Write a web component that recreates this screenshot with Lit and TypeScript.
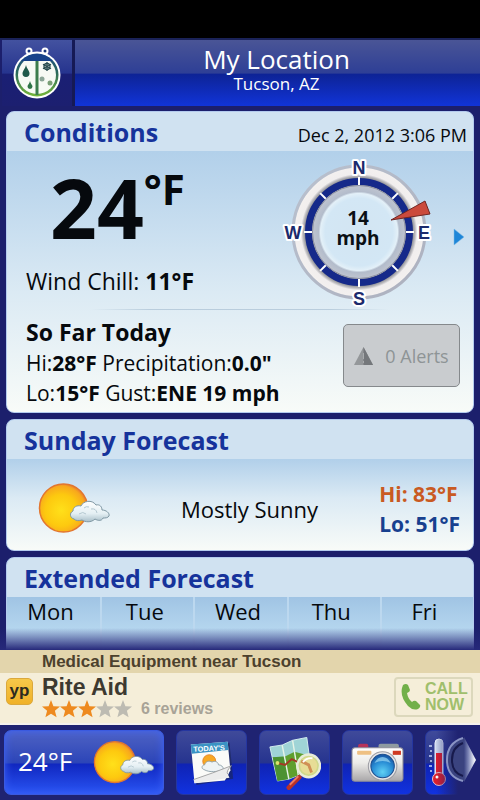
import { LitElement, html, css, svg } from "lit";
import { customElement, property } from "lit/decorators.js";

const CLOUD =
  "M35 37c-4-1-5-6-1-8 0-4 4-6 8-5 2-5 11-7 15-1 4-1 6 2 6 5 4 0 8 3 7 6-1 2-4 2-6 2-1 3-5 3-8 1-4 4-10 3-13 1-3 1-6 1-8-1z";

const sunArt = svg`
  <defs>
    <radialGradient id="sun" cx="0.45" cy="0.55" r="0.55">
      <stop offset="0" stop-color="#ffe01a" />
      <stop offset="0.6" stop-color="#fdc90f" />
      <stop offset="0.92" stop-color="#f8a81c" />
      <stop offset="1" stop-color="#ee8a2a" />
    </radialGradient>
    <linearGradient id="cloud" x1="0" y1="0" x2="0" y2="1">
      <stop offset="0" stop-color="#ffffff" />
      <stop offset="0.6" stop-color="#e4eff3" />
      <stop offset="1" stop-color="#a9bfc9" />
    </linearGradient>
  </defs>
  <circle cx="24.500" cy="26" r="24" fill="url(#sun)" stroke="#e2762f" stroke-width="1.500" />
  <path d=${CLOUD} fill="url(#cloud)" stroke="#7f97a3" stroke-width="1" />
  <path d="M40 32q4-3 7 0M52 27q5-1 6 4M45 26q2-2 5-1" fill="none" stroke="#b4c8d0" stroke-width="1" />
`;

@customElement("weather-glyph")
export class WeatherGlyph extends LitElement {
  static styles = css`
    :host { display: block; }
    .art { display: block; width: 72px; height: 54px; overflow: visible; }
  `;
  render() {
    return html`<svg class="art" viewBox="0 0 72 54" aria-hidden="true">${sunArt}</svg>`;
  }
}

@customElement("wind-compass")
export class WindCompass extends LitElement {
  @property() speed = "";

  static styles = css`
    :host { display: block; }
    .dial { display: block; width: 156px; height: 156px; }
    .point { font: bold 18px "Liberation Sans", sans-serif; fill: #1b2a6c; stroke: #fff; stroke-width: 4px; paint-order: stroke; stroke-linejoin: round; text-anchor: middle; }
    .speed { font: bold 19px "Open Sans", sans-serif; fill: #0a0f14; text-anchor: middle; }
  `;

  render() {
    const ticks = [0, 45, 90, 135, 180, 225, 270, 315];
    return html`
      <svg class="dial" viewBox="-78 -78 156 156" role="img" aria-label="Wind ${this.speed} mph from the east-northeast">
        <defs>
          <linearGradient id="rim" x1="0" y1="0" x2="1" y2="1">
            <stop offset="0" stop-color="#b9c1cf" />
            <stop offset="1" stop-color="#acb0be" />
          </linearGradient>
          <radialGradient id="band" cx="0.5" cy="0.5" r="0.5">
            <stop offset="0.8" stop-color="#77797f" />
            <stop offset="0.85" stop-color="#bcbbbf" />
            <stop offset="0.88" stop-color="#f1eeee" />
            <stop offset="0.97" stop-color="#f3f0ef" />
            <stop offset="1" stop-color="#dcdbe0" />
          </radialGradient>
          <radialGradient id="inner" cx="0.5" cy="0.5" r="0.5">
            <stop offset="0" stop-color="#d3e5f2" />
            <stop offset="0.72" stop-color="#d3e7f5" />
            <stop offset="0.82" stop-color="#e3f0f8" />
            <stop offset="0.86" stop-color="#b3bccb" />
            <stop offset="1" stop-color="#c0c5d0" />
          </radialGradient>
        </defs>
        <circle r="66" fill="url(#band)" stroke="url(#rim)" stroke-width="3" />
        <circle r="47" fill="url(#inner)" />
        <circle r="50.500" fill="none" stroke="#15298a" stroke-width="7" />
        <circle r="46.500" fill="none" stroke="#8c90a0" stroke-width="1" />
        ${ticks.map(
          (angle) => svg`<path d="M0-55V-47" stroke="#fff" stroke-width="2" transform="rotate(${angle})" />`
        )}
        <text class="point" x="0" y="-58">N</text>
        <text class="point" x="65" y="7">E</text>
        <text class="point" x="0" y="73">S</text>
        <text class="point" x="-66" y="7">W</text>
        <path d="M32-12L66-31L71-18Z" fill="#cb4a3c" stroke="#6f2623" stroke-width="1" />
        <text class="speed" x="-1" y="-7">${this.speed}</text>
        <text class="speed" x="-1" y="13">mph</text>
      </svg>
    `;
  }
}

const bugLogo = html`
  <svg class="logo" viewBox="0 0 50 52" aria-hidden="true">
    <defs>
      <linearGradient id="shell" x1="0" y1="0" x2="0" y2="1">
        <stop offset="0" stop-color="#1c4a8a" />
        <stop offset="0.45" stop-color="#2b6a5a" />
        <stop offset="1" stop-color="#76b73a" />
      </linearGradient>
      <clipPath id="body"><circle cx="25" cy="28" r="21" /></clipPath>
    </defs>
    <g fill="none" stroke="#fff" stroke-width="2">
      <circle cx="17" cy="4" r="2.500" fill="#17357a" />
      <circle cx="33" cy="4" r="2.500" fill="#17357a" />
      <path d="M18 6l2 3M32 6l-2 3" />
    </g>
    <circle cx="25" cy="28" r="23.500" fill="#fff" />
    <circle cx="25" cy="28" r="21.500" fill="url(#shell)" />
    <circle cx="25" cy="28" r="19" fill="#f7faf4" />
    <g clip-path="url(#body)">
      <path d="M0 5H50V14H0Z" fill="#17428a" />
      <path d="M23.500 14h3v34h-3z" fill="#3c7d4c" />
    </g>
    <path d="M14 18c1 4 3.500 6 3.500 8.500a3.500 3.500 0 0 1-7 0C10.500 24 13 22 14 18z" fill="#1f5a4a" />
    <path d="M18 34c.5 2.500 2.500 4 2.500 5.500a2.500 2.500 0 0 1-5 0C15.500 38 17.500 36.500 18 34z" fill="#2f7447" />
    <g stroke="#2a4d50" stroke-width="1.300">
      <path d="M35 15v9M31 17.300l8 4.500M31 21.800l8-4.500" />
      <circle cx="35" cy="19.500" r="3" fill="none" />
    </g>
    <circle cx="30" cy="32" r="2.500" fill="#8ba596" />
    <circle cx="38" cy="36" r="2.500" fill="#7a9f77" />
  </svg>
`;

const todayIcon = html`
  <svg class="tool" viewBox="0 0 50 50" aria-hidden="true">
    <path d="M4 6L44 3L48 42L8 49Z" fill="#1b2450" opacity="0.6" />
    <path d="M2 5L42 2L45 33L39 44L6 47Z" fill="#fbfbf8" />
    <path d="M2 5L42 2L43 11L3 15Z" fill="#3a93c4" />
    <text class="leaf" x="22" y="12" transform="rotate(-3 22 12)">TODAY'S</text>
    <circle cx="22" cy="23" r="7" fill="#f7a823" stroke="#e4852b" />
    <path d="M16 32c-3-1-2-5 1-5 1-4 5-5 8-3 3-2 7 0 7 3 4 0 7 4 4 6-5 1-13 3-20-1z" fill="#eef3f5" stroke="#8fa1aa" />
    <path d="M5 43Q26 36 46 28Q40 36 44 41L6 47Z" fill="#ececec" />
    <path d="M5 43Q26 36 46 28Q40 34 42 37" fill="none" stroke="#a0a0a0" />
  </svg>
`;

const mapIcon = html`
  <svg class="tool wide" viewBox="0 0 56 56" aria-hidden="true">
    <path d="M2 11L15 9L26 4L41 1L46 38L32 41L22 45L10 47Z" fill="#9fd4d6" stroke="#d6eef0" />
    <path d="M5 22L18 21L28 16L43 20L46 38L32 41L22 45L10 47Z" fill="#5f9f2e" />
    <path d="M5 22L18 21L22 45L10 47Z" fill="#3f8a35" opacity="0.600" />
    <path d="M15 9L22 45M26 4L32 41" stroke="#e5f3e6" stroke-width="1.500" />
    <path d="M10 28L18 30L25 24L34 28L42 31" fill="none" stroke="#a43a24" stroke-width="2" />
    <circle cx="10" cy="28" r="2" fill="#d9e36c" />
    <path d="M33 43L22 54" stroke="#b8322a" stroke-width="5" stroke-linecap="round" />
    <path d="M32 42L23 51" stroke="#ef7b63" stroke-width="2" />
    <circle cx="43" cy="31" r="12" fill="#cfd98a" stroke="#e9ecd9" stroke-width="2.500" />
    <circle cx="43" cy="31" r="9" fill="#e7dd96" />
    <path d="M35 26L43 30L46 38" fill="none" stroke="#d08f55" stroke-width="3" />
    <path d="M37 27Q41 22 47 23" fill="none" stroke="#fff" stroke-width="2" />
  </svg>
`;

const cameraIcon = html`
  <svg class="tool wide" viewBox="0 0 52 52" aria-hidden="true">
    <defs>
      <linearGradient id="case" x1="0" y1="0" x2="0" y2="1">
        <stop offset="0" stop-color="#ffffff" />
        <stop offset="0.45" stop-color="#ecebe8" />
        <stop offset="1" stop-color="#a8a6a8" />
      </linearGradient>
      <radialGradient id="lens" cx="0.5" cy="0.75" r="0.7">
        <stop offset="0" stop-color="#5fd0f4" />
        <stop offset="0.6" stop-color="#2a8fd6" />
        <stop offset="1" stop-color="#175aa8" />
      </radialGradient>
    </defs>
    <rect x="7" y="7" width="10" height="6" rx="2" fill="#b5335a" />
    <rect x="27" y="7" width="20" height="6" rx="2" fill="#8e9aa0" />
    <rect x="1" y="11" width="50" height="33" rx="3" fill="url(#case)" stroke="#8d8d96" />
    <rect x="6" y="14" width="14" height="4" rx="1" fill="#eec083" />
    <rect x="41" y="14" width="8" height="4" fill="#cf3a22" />
    <circle cx="31" cy="29" r="14" fill="#e6e6e8" stroke="#9c9ca2" />
    <circle cx="31" cy="29" r="11.500" fill="url(#lens)" stroke="#1d4f8f" />
    <path d="M23 26Q26 20 31 20T39 26Q31 22 23 26z" fill="#9bd8f5" opacity="0.700" />
  </svg>
`;

const thermoIcon = html`
  <svg class="thermo" viewBox="0 0 18 50" aria-hidden="true">
    <path d="M7 5a4 4 0 0 1 8 0V36H7Z" fill="#c9d5ea" stroke="#e8eefa" />
    <path d="M8 15H14V38H8Z" fill="#e01f2d" />
    <circle cx="11" cy="41" r="6.500" fill="#dc1f2c" stroke="#f1c4cc" />
    <circle cx="9" cy="39" r="1.500" fill="#fff" />
    <path d="M1 8h3M2 13h2M1 18h3M2 23h2M1 28h3M2 33h2" stroke="#c7d3f5" stroke-width="1.500" />
  </svg>
`;

const STAR = "M9 0l2.400 6.200 6.600.4-5.100 4.200 1.700 6.500L9 13.700l-5.600 3.600 1.700-6.500L0 6.600l6.600-.4z";

@customElement("app-root")
export class AppRoot extends LitElement {
  static styles = css`
    :host {
      display: flex;
      flex-direction: column;
      height: 100vh;
      overflow: hidden;
      background: #1c1f6c;
      color: #06090d;
      font-family: "Open Sans", "Noto Sans", sans-serif;
    }
    * { box-sizing: border-box; }
    h1, h2, h3, p, ul { margin: 0; padding: 0; }
    ul { list-style: none; }
    button { font: inherit; color: inherit; border: 0; padding: 0; background: none; }
    b { font-weight: 700; }

    .status { flex: none; height: 38px; background: #000; }
    .top { flex: none; display: flex; height: 68px; border-top: 2px solid #1a2258; background: #1c1f6c; }
    .brand {
      width: 75px; display: grid; place-items: center;
      border-left: 2px solid #1c1f6c; border-right: 3px solid #161a55;
      background: linear-gradient(#4352a0, #26348e 50%, #1a1f74 52%, #1c1f70);
    }
    .logo { width: 50px; height: 52px; }
    .place {
      flex: 1; text-align: center; color: #fff; padding: 4px 2px 0 0;
      background: linear-gradient(#4a5596, #2e3f96 50%, #0d2396 52%, #1134d8);
    }
    .title { font-size: 26px; line-height: 30px; font-weight: 400; }
    .city { font-size: 17px; line-height: 20px; }

    .feed {
      flex: 1; min-height: 0; overflow: hidden; position: relative;
      display: flex; flex-direction: column; gap: 6px; padding: 5px 6px 0;
    }
    .shade { position: absolute; left: 0; right: 0; bottom: 0; height: 22px; background: linear-gradient(#1c1f6c00, #26297a); }
    .card {
      flex: none; border-radius: 8px; border: 1px solid #b4cbee; overflow: hidden;
      background: linear-gradient(#b2d0ea 40px, #dbeaf4 60%, #f8fbf8);
    }
    .head {
      display: flex; align-items: center; justify-content: space-between;
      height: 39px; padding: 0 6px 0 17px; background: #d0e2f1;
    }
    .heading { font-size: 25px; line-height: 32px; font-weight: 700; color: #16339b; }
    .when { font-size: 18px; line-height: 24px; padding-top: 6px; }

    .now { display: flex; justify-content: space-between; height: 158px; padding: 3px 8px 0 19px; }
    .reading { display: flex; flex-direction: column; justify-content: space-between; padding: 8px 0 12px; }
    .temp { display: flex; padding-left: 24px; font-weight: 700; }
    .degrees { font-size: 82px; line-height: 90px; }
    .unit { font-size: 42px; line-height: 54px; }
    .chill { font-size: 23px; line-height: 32px; }
    .wind { display: flex; align-items: center; gap: 16px; }
    .next-place { padding-top: 10px; }
    .next { width: 12px; height: 18px; display: block; }
    .rule { height: 1px; margin: 0 84px; background: linear-gradient(90deg, #b9cddd00, #b9cddd 20%, #b9cddd 80%, #b9cddd00); }
    .today { display: flex; justify-content: space-between; align-items: flex-start; height: 102px; padding: 6px 13px 0 19px; }
    .subhead { font-size: 23px; line-height: 32px; font-weight: 700; }
    .line { font-size: 21px; line-height: 30px; white-space: nowrap; }
    .alerts {
      display: flex; align-items: center; justify-content: center; gap: 12px;
      width: 117px; height: 63px; margin-top: 8px; font-size: 18px; color: #8e9496;
      border: 1px solid #85898c; border-radius: 5px; background: #c9cccf;
    }
    .warn { width: 19px; height: 18px; }

    .outlook {
      display: grid; grid-template-columns: 1fr auto 1fr; align-items: center;
      height: 91px; padding: 8px 13px 0 32px;
    }
    .sky { font-size: 22px; line-height: 30px; }
    .range { justify-self: end; font-size: 21px; line-height: 30px; font-weight: 700; }
    .hi { color: #c95a22; }
    .lo { color: #17408f; }

    .week { display: grid; grid-template-columns: repeat(5, 1fr); height: 110px; background: linear-gradient(#a0c4e4, #bcdcf2 40%, #a9cfec); }
    .day { text-align: center; padding-right: 6px; font-size: 22px; line-height: 28px; }
    .day + .day { border-left: 2px solid #bcd8ef; }

    .ad { flex: none; font-family: "Liberation Sans", Arial, sans-serif; font-weight: 700; color: #3d3930; background: #f5eed9; border-bottom: 2px solid #f4f1ee; }
    .pitch { padding-left: 42px; font-size: 17px; line-height: 23px; color: #4c412d; background: #e3d5ac; }
    .offer { display: flex; height: 50px; padding: 2px 7px 0 6px; }
    .yp {
      width: 27px; height: 27px; margin: 3px 9px 0 0; border-radius: 5px; text-align: center;
      font-size: 17px; line-height: 23px; color: #2c2a20; background: linear-gradient(#f6c84a, #f0b128); border: 1px solid #dba83c;
    }
    .firm { flex: 1; }
    .name { font-size: 23px; line-height: 24px; }
    .score { display: flex; align-items: center; gap: 9px; font-size: 16px; line-height: 20px; color: #a8a397; }
    .stars { width: 90px; height: 18px; }
    .call {
      display: flex; align-items: center; gap: 4px; width: 79px; height: 40px; margin-top: 2px; padding-left: 5px;
      border: 2px solid #dcd8bc; border-radius: 4px; text-align: left;
      font-size: 16px; line-height: 16px; color: #a0bf6c;
    }
    .phone { width: 20px; height: 26px; flex: none; }

    .tabs { flex: none; position: relative; display: flex; gap: 12px; height: 75px; padding: 5px 4px; overflow: hidden; background: #1f2372; }
    .tab {
      flex: none; width: 71px; display: grid; place-items: center; border-radius: 7px; border: 1px solid #2536a0;
      background: linear-gradient(#3f4a9a, #26348f 50%, #0f23b4 53%, #1132e0);
    }
    .tab.current {
      width: 160px; display: flex; align-items: center; justify-content: space-between; padding: 0 8px 0 13px;
      color: #fff; font-size: 26px; line-height: 36px; border-color: #3a5ae0;
      background: linear-gradient(#4f63c4, #2c45b8 50%, #1027c0 53%, #2a55f4);
      box-shadow: inset 0 0 8px #3d62f5;
    }
    .tab.last { justify-items: start; padding-left: 2px; }
    .current-temp { padding-bottom: 4px; }
    .current weather-glyph { zoom: 0.85; }
    .tool { width: 46px; height: 48px; }
    .tool.wide { width: 53px; height: 54px; }
    .leaf { font: bold 8px "Liberation Sans", sans-serif; fill: #fff; text-anchor: middle; }
    .thermo { width: 18px; height: 50px; }
    .more { position: absolute; right: 0; top: 5px; width: 44px; height: 66px; background: linear-gradient(90deg, #1f237200, #1f2372 50%); }
    .knob { display: block; width: 44px; height: 66px; }
  `;

  private days = ["Mon", "Tue", "Wed", "Thu", "Fri"];

  render() {
    return html`
      <div class="status"></div>
      <header class="top">
        <button class="brand" aria-label="Menu">${bugLogo}</button>
        <div class="place">
          <h1 class="title">My Location</h1>
          <p class="city">Tucson, AZ</p>
        </div>
      </header>

      <main class="feed">
        <section class="card">
          <div class="head">
            <h2 class="heading">Conditions</h2>
            <time class="when" datetime="2012-12-02T15:06">Dec 2, 2012 3:06 PM</time>
          </div>
          <div class="now">
            <div class="reading">
              <div class="temp"><span class="degrees">24</span><span class="unit">°F</span></div>
              <p class="chill">Wind Chill: <b>11°F</b></p>
            </div>
            <div class="wind">
              <wind-compass speed="14"></wind-compass>
              <button class="next-place" aria-label="Next location">
                <svg class="next" viewBox="0 0 12 18" aria-hidden="true">
                  <path d="M1 1L11 9L1 17Z" fill="#1e86d8" stroke="#7db8e6" stroke-width="0.500" />
                </svg>
              </button>
            </div>
          </div>
          <div class="rule"></div>
          <div class="today">
            <div>
              <h3 class="subhead">So Far Today</h3>
              <p class="line">Hi:<b>28°F</b> Precipitation:<b>0.0"</b></p>
              <p class="line">Lo:<b>15°F</b> Gust:<b>ENE 19 mph</b></p>
            </div>
            <button class="alerts">
              <svg class="warn" viewBox="0 0 19 18" aria-hidden="true">
                <path d="M9.500 0L19 18H0Z" fill="#94979a" />
                <path d="M9.500 0L19 18H9.500Z" fill="#74777b" />
                <path d="M9.500 6V12M9.500 14v2" stroke="#a9acae" stroke-width="1" />
              </svg>
              <span>0 Alerts</span>
            </button>
          </div>
        </section>

        <section class="card">
          <div class="head"><h2 class="heading">Sunday Forecast</h2></div>
          <div class="outlook">
            <weather-glyph></weather-glyph>
            <p class="sky">Mostly Sunny</p>
            <div class="range">
              <p class="hi">Hi: 83°F</p>
              <p class="lo">Lo: 51°F</p>
            </div>
          </div>
        </section>

        <section class="card">
          <div class="head"><h2 class="heading">Extended Forecast</h2></div>
          <ul class="week">
            ${this.days.map((day) => html`<li class="day">${day}</li>`)}
          </ul>
        </section>
        <div class="shade"></div>
      </main>

      <aside class="ad">
        <p class="pitch">Medical Equipment near Tucson</p>
        <div class="offer">
          <div class="yp">yp</div>
          <div class="firm">
            <p class="name">Rite Aid</p>
            <div class="score">
              <svg class="stars" viewBox="0 0 90 18" role="img" aria-label="3 of 5 stars">
                ${[0, 1, 2, 3, 4].map(
                  (n) => svg`<path d=${STAR} transform="translate(${n * 18})" fill=${n < 3 ? "#ee8a1f" : "#bdbbb2"} />`
                )}
              </svg>
              <span>6 reviews</span>
            </div>
          </div>
          <button class="call">
            <svg class="phone" viewBox="0 0 20 26" aria-hidden="true">
              <path d="M2 1Q5-1 7 1L9 6Q9 8 6 9Q7 15 11 18Q13 16 15 17L19 21Q20 23 17 25Q12 27 7 22Q-1 13 1 4Z" fill="#72b04a" />
            </svg>
            <span>CALL<br />NOW</span>
          </button>
        </div>
      </aside>

      <nav class="tabs">
        <button class="tab current"><span class="current-temp">24°F</span><weather-glyph></weather-glyph></button>
        <button class="tab" aria-label="Today">${todayIcon}</button>
        <button class="tab" aria-label="Maps">${mapIcon}</button>
        <button class="tab" aria-label="Cameras">${cameraIcon}</button>
        <button class="tab last" aria-label="Temperature">${thermoIcon}</button>
        <button class="more" aria-label="More">
          <svg class="knob" viewBox="0 0 44 66" aria-hidden="true">
            <defs>
              <linearGradient id="chrome" x1="0" y1="0" x2="1" y2="0">
                <stop offset="0" stop-color="#3a4382" />
                <stop offset="0.35" stop-color="#7a83b4" />
                <stop offset="0.75" stop-color="#d5d9ea" />
                <stop offset="1" stop-color="#ffffff" />
              </linearGradient>
            </defs>
            <path d="M28 8Q12 12 12 30T28 51Z" fill="#3a437f" />
            <path d="M27 8Q11 13 11 30T27 51" fill="none" stroke="#8a94c4" stroke-width="2" />
            <path d="M27 13Q16 17 16 30T27 46" fill="none" stroke="#171a4c" stroke-width="2" />
            <path d="M28 7L40 30L28 52Z" fill="url(#chrome)" />
          </svg>
        </button>
      </nav>
    `;
  }
}
